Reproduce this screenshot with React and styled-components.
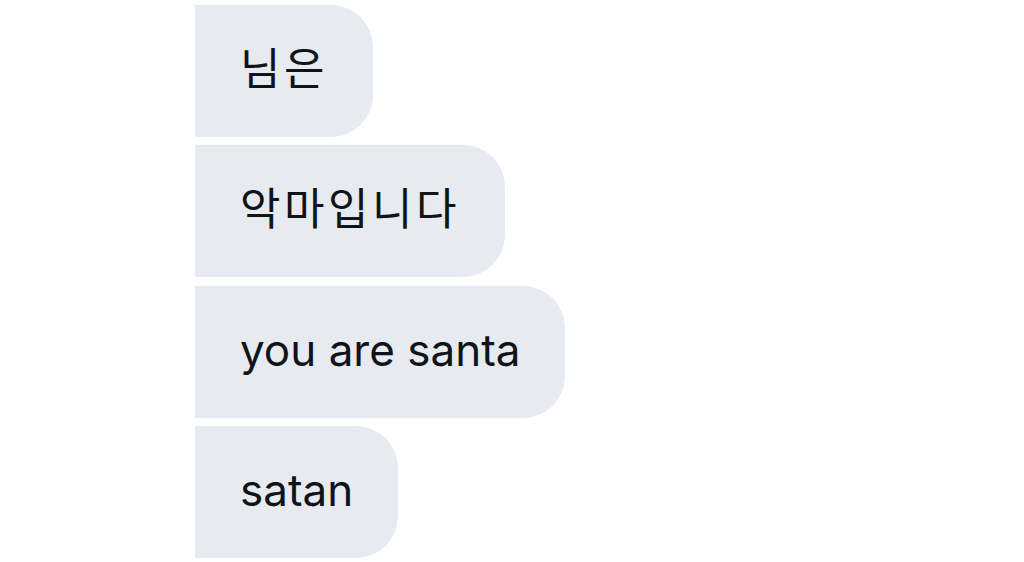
import styled, { createGlobalStyle } from "styled-components"

const Global = createGlobalStyle`
    html, body {
        margin: 0;
        padding: 0;
        background: #ffffff;
    }
    body {
        width: 1024px;
        height: 562px;
        overflow: hidden;
    }
`

const Thread = styled.div`
    display: flex;
    flex-direction: column;
    align-items: flex-start;
    gap: 8.33px;
    padding: 5px 0 0 195px;
`

const Bubble = styled.div`
    display: flex;
    align-items: center;
    height: 132px;
    box-sizing: border-box;
    padding: 0 45px 4px 45px;
    background-color: #e7eaf0;
    border-radius: 0 42px 42px 0;
    color: #0f1419;
    font-family: Inter, "Noto Sans CJK KR", sans-serif;
    font-size: 44px;
    letter-spacing: ${(p) => (p.$wide ? "3.5px" : "0")};
    line-height: 1;
    white-space: nowrap;
`

const messages = [
    { text: "님은", korean: true },
    { text: "악마입니다", korean: true },
    { text: "you are santa" },
    { text: "satan" },
]

export default function App() {
    return (
        <>
            <Global />
            <Thread>
                {messages.map((m) => (
                    <Bubble key={m.text} $wide={m.korean}>{m.text}</Bubble>
                ))}
            </Thread>
        </>
    )
}
